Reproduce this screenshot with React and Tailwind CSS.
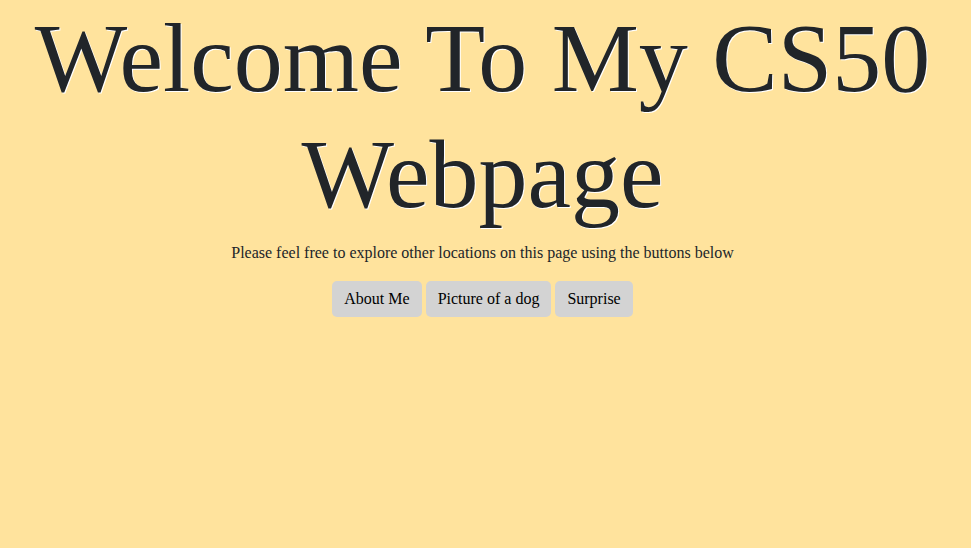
import React from 'react';

const App = () => {
    return (
        <div className="min-h-screen bg-[#ffe39d] pr-[6px] text-center text-[#212529] font-['Liberation_Serif',serif]">
            <h1 className="text-[98px] leading-[116px] font-normal mb-[9px] [text-shadow:1px_1px_#fff]">
                Welcome To My CS50 Webpage
            </h1>
            <p className="text-base leading-6 mb-4">
                Please feel free to explore other locations on this page using the buttons below
            </p>
            <div className="flex justify-center gap-1">
                <button className="bg-[#d3d3d3] text-black text-base leading-6 px-3 py-1.5 rounded-[5px]">About Me</button>
                <button className="bg-[#d3d3d3] text-black text-base leading-6 px-3 py-1.5 rounded-[5px]">Picture of a dog</button>
                <button className="bg-[#d3d3d3] text-black text-base leading-6 px-3 py-1.5 rounded-[5px]">Surprise</button>
            </div>
        </div>
    );
};

export default App;
